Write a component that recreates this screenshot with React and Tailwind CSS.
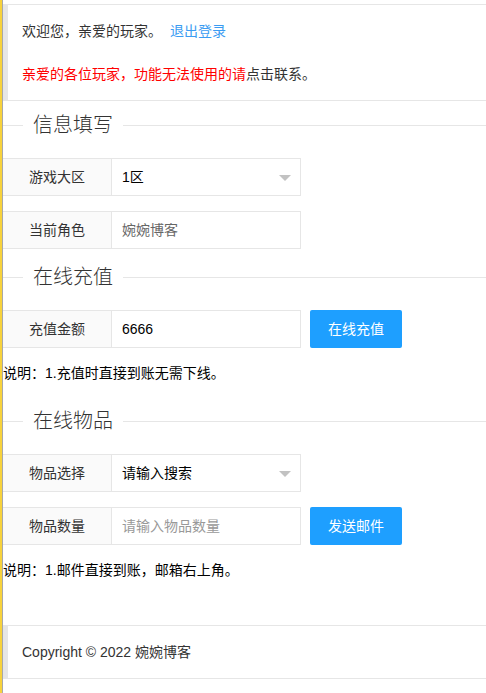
const font = { fontFamily: '"Liberation Sans", "Noto Sans CJK SC", sans-serif' }

function FieldTitle({ children, className = '' }) {
  return (
    <div className={`flex items-center h-[28px] ${className}`}>
      <div className="w-[20px] h-px bg-[#e6e6e6]" />
      <span className="px-[10px] text-[20px] font-light leading-[28px] text-[#333]">{children}</span>
      <div className="flex-1 h-px bg-[#e6e6e6]" />
    </div>
  )
}

function Label({ children }) {
  return (
    <div className="w-[108px] h-[38px] flex items-center justify-center bg-[#fafafa] border-y border-[#e6e6e6] text-[14px] text-[#333]">
      {children}
    </div>
  )
}

function Field({ children, select }) {
  return (
    <div className="relative w-[190px] h-[38px] flex items-center px-[10px] border border-[#e6e6e6] bg-white text-[14px]">
      {children}
      {select && (
        <span className="absolute right-[9px] top-[16px] w-0 h-0 border-x-[6px] border-x-transparent border-t-[6px] border-t-[#c2c2c2]" />
      )}
    </div>
  )
}

function Button({ children }) {
  return (
    <button className="ml-[9px] w-[92px] h-[38px] rounded-[2px] bg-[#1e9fff] text-white text-[14px]">
      {children}
    </button>
  )
}

export default function App() {
  return (
    <div className="flex min-h-screen bg-white overflow-hidden" style={font}>
      <div className="w-[2px] shrink-0 bg-[#f7d23c]" />
      <div className="w-px shrink-0 bg-[#a8a8a8]" />
      <div className="flex-1 pt-[4px] text-[#333]">
        {/* header notice */}
        <div className="border-y border-l-[5px] border-[#e6e6e6] pl-[14px] pt-[14px] pb-[13px] text-[14px]">
          <div className="h-[25px] leading-[25px]">
            欢迎您，亲爱的玩家。
            <a className="ml-[8px] text-[#3b9cf2] cursor-pointer">退出登录</a>
          </div>
          <div className="mt-[18px] h-[25px] leading-[25px]">
            <span className="text-[#ff0000]">亲爱的各位玩家，功能无法使用的请</span>
            <span>点击联系。</span>
          </div>
        </div>

        <FieldTitle className="mt-[10px]">信息填写</FieldTitle>
        <div className="mt-[19px] flex">
          <Label>游戏大区</Label>
          <Field select><span className="text-[#000]">1区</span></Field>
        </div>
        <div className="mt-[15px] flex">
          <Label>当前角色</Label>
          <Field><span className="text-[#666]">婉婉博客</span></Field>
        </div>

        <FieldTitle className="mt-[14px]">在线充值</FieldTitle>
        <div className="mt-[19px] flex">
          <Label>充值金额</Label>
          <Field><span className="text-[#000]">6666</span></Field>
          <Button>在线充值</Button>
        </div>
        <p className="mt-[15px] h-[20px] leading-[20px] text-[14px] text-[#000]">说明：1.充值时直接到账无需下线。</p>

        <FieldTitle className="mt-[24px]">在线物品</FieldTitle>
        <div className="mt-[19px] flex">
          <Label>物品选择</Label>
          <Field select><span className="text-[#000]">请输入搜索</span></Field>
        </div>
        <div className="mt-[15px] flex">
          <Label>物品数量</Label>
          <Field><span className="text-[#999]">请输入物品数量</span></Field>
          <Button>发送邮件</Button>
        </div>
        <p className="mt-[15px] h-[20px] leading-[20px] text-[14px] text-[#000]">说明：1.邮件直接到账，邮箱右上角。</p>

        {/* footer */}
        <div className="mt-[45px] border-y border-l-[5px] border-[#e6e6e6] pl-[14px] pt-[14px] pb-[13px] text-[14px]">
          <div className="h-[25px] leading-[25px]">Copyright © 2022 婉婉博客</div>
        </div>
      </div>
    </div>
  )
}
